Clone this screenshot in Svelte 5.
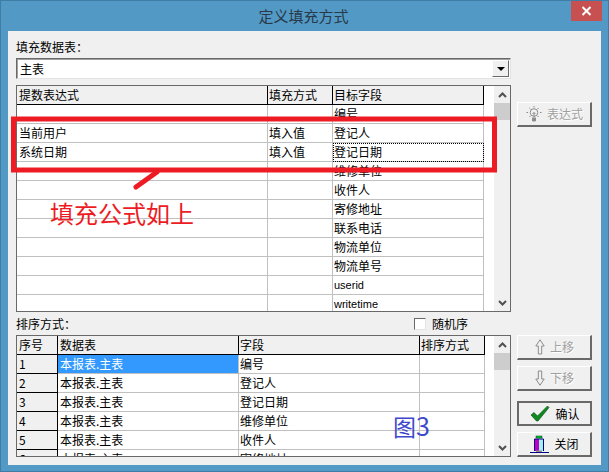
<script>
  const fill = [
    ['', '', '编号'],
    ['当前用户', '填入值', '登记人'],
    ['系统日期', '填入值', '登记日期'],
    ['', '', '维修单位'],
    ['', '', '收件人'],
    ['', '', '寄修地址'],
    ['', '', '联系电话'],
    ['', '', '物流单位'],
    ['', '', '物流单号'],
    ['', '', 'userid'],
    ['', '', 'writetime']
  ];
  const sort = ['编号', '登记人', '登记日期', '维修单位', '收件人', '寄修地址'];
</script>

<div class="window">
  <header class="titlebar">
    <h1>定义填充方式</h1>
    <button class="close" aria-label="关闭">
      <svg width="11" height="10" viewBox="0 0 11 10"><path d="M1.5 1 9.5 9M9.5 1 1.5 9" stroke="#fff" stroke-width="2" fill="none"/></svg>
    </button>
  </header>

  <main class="client">
    <div class="label top">填充数据表：</div>
    <div class="combo">
      <span class="combo-text">主表</span>
      <span class="combo-btn"><i></i></span>
    </div>

    <div class="row first">
      <div class="grid g1">
        <div class="table">
          <div class="tr head cols1">
            <div class="td">提数表达式</div>
            <div class="td">填充方式</div>
            <div class="td">目标字段</div>
          </div>
          {#each fill as r, i}
            <div class="tr cols1">
              <div class="td">{r[0]}</div>
              <div class="td">{r[1]}</div>
              <div class="td" class:focus={i === 2} class:latin={i > 8}>{r[2]}</div>
            </div>
          {/each}
        </div>
        <div class="scroll">
          <svg class="arrow" width="9" height="6" viewBox="0 0 9 6"><path d="M1 5 4.5 1.5 8 5" stroke="#505050" stroke-width="2" fill="none"/></svg>
          <div class="thumb"></div>
          <svg class="arrow down" width="9" height="6" viewBox="0 0 9 6"><path d="M1 1 4.5 4.5 8 1" stroke="#505050" stroke-width="2" fill="none"/></svg>
        </div>
      </div>
      <div class="side side1">
        <button class="btn off">
          <svg width="16" height="18" viewBox="0 0 16 18"><g fill="none" stroke="#8c8c8c"><circle cx="8" cy="7.5" r="3.8"/><path d="M8 1V2.500M2 7.500H.5M15.500 7.500H14M3.400 3 4.500 4.100M12.600 3 11.500 4.100M3.400 12 4.500 10.900M12.600 12 11.500 10.900M6.500 9 8 7.500 9.500 9M8 7.500V12"/></g><path d="M6 12.500h4v3l-1 1H7l-1-1z" fill="#8c8c8c"/></svg>
          <span>表达式</span>
        </button>
      </div>
    </div>

    <div class="subhead">
      <div class="label">排序方式：</div>
      <label class="check"><span class="box"></span>随机序</label>
    </div>

    <div class="row">
      <div class="grid g2">
        <div class="table">
          <div class="tr head cols2">
            <div class="td">序号</div>
            <div class="td">数据表</div>
            <div class="td">字段</div>
            <div class="td">排序方式</div>
          </div>
          {#each sort as f, i}
            <div class="tr cols2">
              <div class="td fixed">{i + 1}</div>
              <div class="td" class:selected={i === 0}>本报表.主表</div>
              <div class="td">{f}</div>
              <div class="td"></div>
            </div>
          {/each}
        </div>
        <div class="scroll">
          <svg class="arrow" width="9" height="6" viewBox="0 0 9 6"><path d="M1 5 4.5 1.5 8 5" stroke="#505050" stroke-width="2" fill="none"/></svg>
          <div class="thumb"></div>
          <svg class="arrow down" width="9" height="6" viewBox="0 0 9 6"><path d="M1 1 4.5 4.5 8 1" stroke="#505050" stroke-width="2" fill="none"/></svg>
        </div>
      </div>
      <div class="side">
        <button class="btn off">
          <svg width="10" height="16" viewBox="0 0 10 16"><path d="M5 .8 9.200 7H6.700V15H3.300V7H.8Z" fill="#f0f0f0" stroke="#8c8c8c"/></svg>
          <span>上移</span>
        </button>
        <button class="btn off">
          <svg width="10" height="16" viewBox="0 0 10 16"><path d="M5 15.200 9.200 9H6.700V1H3.300V9H.8Z" fill="#f0f0f0" stroke="#8c8c8c"/></svg>
          <span>下移</span>
        </button>
        <button class="btn default">
          <svg width="20" height="17" viewBox="0 0 20 17"><path d="M1 10 4 7.500 7.500 11 17.500 1 19 2.500 8 16H6.500Z" fill="#0f8a1e" stroke="#063f10" stroke-width=".6"/></svg>
          <span>确认</span>
        </button>
        <button class="btn">
          <svg width="19" height="19" viewBox="0 0 19 19"><rect x="6" y="1" width="6" height="2" fill="#00c040" stroke="#004000" stroke-width=".5"/><rect x="5" y="4" width="4" height="12" fill="#c000c0"/><rect x="9" y="4" width="4" height="12" fill="#a0f0f0"/><path d="M4.500 4H13.500V16M4.500 4V16" stroke="#000080" fill="none"/><rect x="6" y="15.500" width="6" height="2" fill="#909090"/><path d="M0 17.500H19" stroke="#000080"/></svg>
          <span>关闭</span>
        </button>
      </div>
    </div>
  </main>

  <svg class="annotation" width="609" height="472" viewBox="0 0 609 472">
    <rect x="13.500" y="119" width="481" height="51" fill="none" stroke="#ed1c24" stroke-width="5"/>
    <path d="M136 187 157 172" stroke="#ed1c24" stroke-width="5" stroke-linecap="round"/>
  </svg>
  <span class="note red">填充公式如上</span>
  <span class="note blue">图<span class="digit">3</span></span>
</div>

<style>
  :global(body) { margin: 0; }
  .window {
    position: relative;
    width: 609px;
    height: 472px;
    box-sizing: border-box;
    background: #5399c5;
    border: 1px solid #3f7da6;
    font: 12px/14px "Noto Sans CJK SC", "Liberation Sans", sans-serif;
    color: #000;
    overflow: hidden;
  }
  .titlebar {
    position: relative;
    height: 30px;
    display: flex;
    justify-content: center;
    align-items: center;
  }
  h1 {
    margin: 0 2px 1px 0;
    font-size: 15px;
    font-weight: 400;
    color: #27394a;
    line-height: 20px;
  }
  .close {
    position: absolute;
    top: 0;
    right: 6px;
    width: 31px;
    height: 20px;
    padding: 0;
    border: 0;
    background: #c75050;
    display: flex;
    align-items: center;
    justify-content: center;
  }
  .client {
    margin: 0 7px;
    height: 434px;
    box-sizing: border-box;
    padding: 8px 8px 0;
    background: #f0f0f0;
  }
  .label { height: 16px; line-height: 16px; }
  .label.top { margin-bottom: 3px; }
  .combo {
    box-sizing: border-box;
    width: 495px;
    height: 21px;
    display: flex;
    background: #fff;
    border-top: 1px solid #696969;
    border-left: 1px solid #696969;
    border-right: 1px solid #e3e3e3;
    border-bottom: 1px solid #e3e3e3;
    box-shadow: inset 1px 1px 0 #a0a0a0;
    padding: 1px 1px 1px 3px;
  }
  .combo-text { flex: 1; line-height: 17px; }
  .combo-btn {
    box-sizing: border-box;
    width: 17px;
    background: #f0f0f0;
    border: 1px solid #fff;
    border-right-color: #696969;
    border-bottom-color: #696969;
    display: flex;
    align-items: center;
    justify-content: center;
  }
  .combo-btn i {
    width: 0;
    height: 0;
    border: 4px solid transparent;
    border-top: 4px solid #000;
    border-bottom: 0;
  }
  .row { display: flex; gap: 6px; align-items: flex-start; }
  .row.first { margin-top: 6px; }
  .grid {
    box-sizing: border-box;
    width: 495px;
    display: flex;
    border: 1px solid #696969;
    background: #fff;
    overflow: hidden;
  }
  .g1 { height: 227px; }
  .g2 { height: 122px; }
  .table { flex: 1; min-width: 0; overflow: hidden; }
  .tr { display: grid; height: 19px; }
  .cols1 { grid-template-columns: 251px 65px 151px; }
  .cols2 { grid-template-columns: 41px 181px 181px 65px; }
  .td {
    box-sizing: border-box;
    height: 19px;
    padding: 0 2px 0 1px;
    line-height: 18px;
    border-right: 1px solid #c0c0c0;
    border-bottom: 1px solid #c0c0c0;
    white-space: nowrap;
    overflow: hidden;
  }
  .td:first-child, .cols2 .td:nth-child(2) { padding-left: 2px; }
  .head .td, .fixed {
    background: #f0f0f0;
    border-right-color: #000;
    border-bottom-color: #000;
  }
  .latin { font-family: "Liberation Sans", sans-serif; font-size: 11px; }
  .focus { outline: 1px dotted #000; outline-offset: -1px; }
  .selected { background: #3399ff; color: #fff; }
  .scroll {
    width: 16px;
    margin-left: 10px;
    background: #f0f0f0;
    position: relative;
    display: flex;
    flex-direction: column;
    align-items: center;
    flex: none;
  }
  .g2 .scroll { margin-left: 9px; }
  .arrow { margin-top: 6px; flex: none; }
  .arrow.down { margin-top: auto; margin-bottom: 5px; }
  .thumb { width: 100%; height: 17px; margin-top: 5px; background: #cdcdcd; }
  .side { width: 75px; display: flex; flex-direction: column; gap: 6px; }
  .side1 { padding-top: 17px; }
  .btn {
    box-sizing: border-box;
    width: 75px;
    height: 25px;
    padding: 0 0 0 1px;
    background: #f0f0f0;
    border: 1px solid #fff;
    border-right: 2px solid #696969;
    border-bottom: 2px solid #696969;
    font: inherit;
    color: #000;
    display: flex;
    align-items: center;
    justify-content: center;
    gap: 5px;
  }
  .btn.off span { color: #a0a0a0; text-shadow: 1px 1px 0 #fff; }
  .btn.default { border: 2px solid #696969; margin-top: 4px; }
  .subhead {
    width: 495px;
    height: 23px;
    display: flex;
    align-items: center;
    justify-content: space-between;
    box-sizing: border-box;
    padding-right: 43px;
  }
  .check { display: flex; align-items: center; gap: 6px; }
  .box {
    box-sizing: border-box;
    width: 12px;
    height: 12px;
    background: #fff;
    border: 1px solid #696969;
    border-right-color: #e3e3e3;
    border-bottom-color: #e3e3e3;
  }
  .annotation { position: absolute; left: -1px; top: -1px; pointer-events: none; }
  .note { position: absolute; white-space: nowrap; }
  .red { left: 49px; top: 197px; font-size: 24px; line-height: 30px; color: #ed1c24; }
  .blue { left: 392px; top: 409px; font-size: 23px; line-height: 30px; color: #3f48cc; }
  .digit { font-size: 25px; }
</style>
